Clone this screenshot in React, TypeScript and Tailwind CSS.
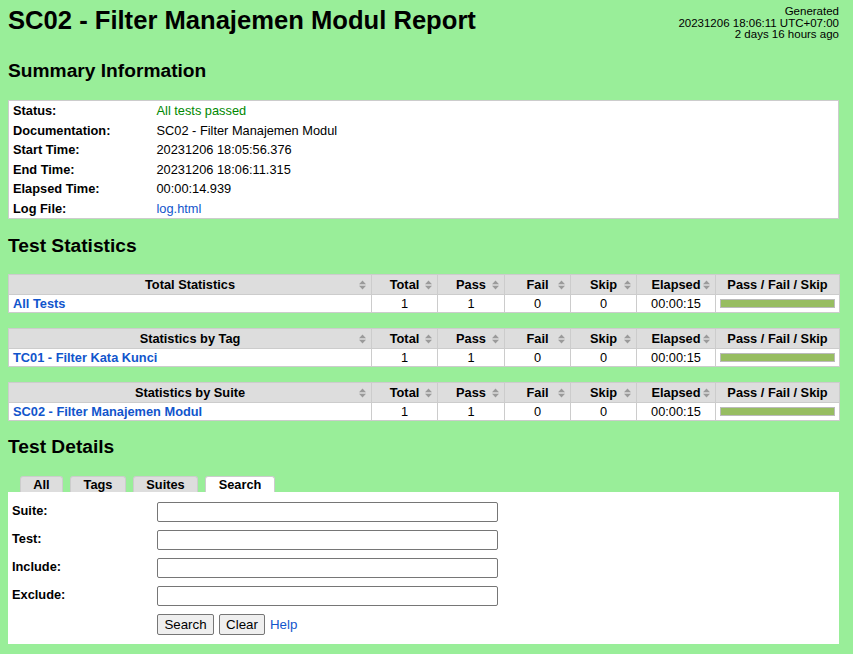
import type { ReactNode } from 'react'

const LINK = 'text-[#1155cc]'

function SortIcon() {
  return (
    <svg width="7" height="10" viewBox="0 0 7 10" fill="#9a9a9a" className="absolute right-[5px] top-1/2 -translate-y-1/2">
      <path d="M3.5 0.5L7 4.2H0z" />
      <path d="M0 5.8h7L3.5 9.5z" />
    </svg>
  )
}

function Th({ children, sort = true }: { children: ReactNode; sort?: boolean }) {
  return (
    <th className="relative border border-[#cccccc] px-[4px] text-center font-bold">
      {children}
      {sort && <SortIcon />}
    </th>
  )
}

function StatTable({ title, name }: { title: string; name: string }) {
  return (
    <table className="mb-[15px] w-[831px] table-fixed border-collapse">
      <colgroup>
        <col className="w-[363px]" />
        <col className="w-[66px]" />
        <col className="w-[67px]" />
        <col className="w-[66px]" />
        <col className="w-[66px]" />
        <col className="w-[79px]" />
        <col className="w-[124px]" />
      </colgroup>
      <thead>
        <tr className="h-[20px] bg-[#dddddd] leading-[15px]">
          <Th>{title}</Th>
          <Th>Total</Th>
          <Th>Pass</Th>
          <Th>Fail</Th>
          <Th>Skip</Th>
          <Th>Elapsed</Th>
          <Th sort={false}>Pass / Fail / Skip</Th>
        </tr>
      </thead>
      <tbody>
        <tr className="h-[18px] bg-white text-center leading-[15px]">
          <td className="border border-[#cccccc] px-[4px] text-left">
            <a className={`${LINK} font-bold`} href="#">{name}</a>
          </td>
          <td className="border border-[#cccccc]">1</td>
          <td className="border border-[#cccccc]">1</td>
          <td className="border border-[#cccccc]">0</td>
          <td className="border border-[#cccccc]">0</td>
          <td className="border border-[#cccccc]">00:00:15</td>
          <td className="border border-[#cccccc] px-[4px]">
            <div className="h-[9px] border border-[#bbbbbb] bg-[#97bd61]" />
          </td>
        </tr>
      </tbody>
    </table>
  )
}

const summary: [string, ReactNode][] = [
  ['Status:', <span className="text-[#008800]">All tests passed</span>],
  ['Documentation:', 'SC02 - Filter Manajemen Modul'],
  ['Start Time:', '20231206 18:05:56.376'],
  ['End Time:', '20231206 18:06:11.315'],
  ['Elapsed Time:', '00:00:14.939'],
  ['Log File:', <a className={LINK} href="#">log.html</a>],
]

const tabs = [
  { label: 'All', w: 'w-[43px]', active: false },
  { label: 'Tags', w: 'w-[56px]', active: false },
  { label: 'Suites', w: 'w-[65px]', active: false },
  { label: 'Search', w: 'w-[70px]', active: true },
]

export default function App() {
  return (
    <div className="min-h-screen bg-[#99ee99] pt-[6px] pl-[8px] font-['Liberation_Sans',Arial,sans-serif] text-[12.8px] text-black">
      <div className="w-[831px]">
        <div className="flex h-[29px] items-start justify-between">
          <h1 className="text-[25.6px] font-bold leading-[29px]">SC02 - Filter Manajemen Modul Report</h1>
          <div className="text-right text-[11.5px] leading-[11.7px]">
            <div>Generated</div>
            <div>20231206 18:06:11 UTC+07:00</div>
            <div>2 days 16 hours ago</div>
          </div>
        </div>

        <h2 className="mt-[25px] mb-[18px] text-[19.2px] font-bold leading-[22px]">Summary Information</h2>
        <table className="w-[831px] border-collapse border border-[#cccccc] bg-white">
          <tbody>
            {summary.map(([k, v]) => (
              <tr key={k} className="leading-[15.5px]">
                <th className="w-[144px] px-[4px] py-[2px] text-left align-top font-bold whitespace-nowrap">{k}</th>
                <td className="px-[4px] py-[2px] align-top">{v}</td>
              </tr>
            ))}
          </tbody>
        </table>

        <h2 className="mt-[16px] mb-[17px] text-[19.2px] font-bold leading-[22px]">Test Statistics</h2>
        <StatTable title="Total Statistics" name="All Tests" />
        <StatTable title="Statistics by Tag" name="TC01 - Filter Kata Kunci" />
        <StatTable title="Statistics by Suite" name="SC02 - Filter Manajemen Modul" />

        <h2 className="mt-0 mb-[18px] text-[19.2px] font-bold leading-[22px]">Test Details</h2>
        <div className="flex gap-[7px] pl-[12px]">
          {tabs.map((t) => (
            <div
              key={t.label}
              className={`${t.w} h-[16px] rounded-t-[3px] border border-b-0 border-[#cccccc] text-center font-bold leading-[16px] ${t.active ? 'bg-white' : 'bg-[#dddddd]'}`}
            >
              {t.label}
            </div>
          ))}
        </div>
        <div className="flex flex-col gap-[8px] bg-white pt-[10px] pb-[9px] pl-[4px]">
          {['Suite:', 'Test:', 'Include:', 'Exclude:'].map((l) => (
            <div key={l} className="flex">
              <label className="w-[145px] pt-[1px] font-bold leading-[15px]">{l}</label>
              <input className="h-[20px] w-[341px] rounded-[2px] border border-[#767676] bg-white" />
            </div>
          ))}
          <div className="flex items-center pl-[145px]">
            <button className="h-[21px] w-[57px] rounded-[2px] border border-[#767676] bg-[#efefef] text-[13.3px]">Search</button>
            <button className="ml-[5px] h-[21px] w-[46px] rounded-[2px] border border-[#767676] bg-[#efefef] text-[13.3px]">Clear</button>
            <a className={`${LINK} ml-[5px] text-[13.3px]`} href="#">Help</a>
          </div>
        </div>
      </div>
    </div>
  )
}
